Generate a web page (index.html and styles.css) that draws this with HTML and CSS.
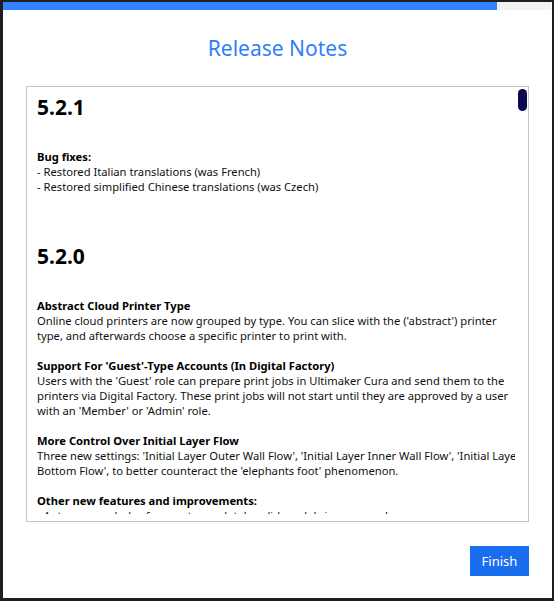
FILE: index.html
```html
<!DOCTYPE html>
<html>
<head>
<meta charset="utf-8">
<link rel="stylesheet" href="styles.css">
</head>
<body>
<div class="backdrop">
  <div class="dialog">
    <div class="progress"><div class="progress-fill"></div></div>
    <h1 class="title">Release Notes</h1>
    <div class="notes">
      <div class="notes-scroll">
        <h2 class="version first">5.2.1</h2>
        <p><b>Bug fixes:</b><br>- Restored Italian translations (was French)<br>- Restored simplified Chinese translations (was Czech)</p>
        <h2 class="version second">5.2.0</h2>
        <p class="after-version"><b>Abstract Cloud Printer Type</b><br>Online cloud printers are now grouped by type. You can slice with the ('abstract') printer<br>type, and afterwards choose a specific printer to print with.</p>
        <p><b>Support For 'Guest'-Type Accounts (In Digital Factory)</b><br>Users with the 'Guest' role can prepare print jobs in Ultimaker Cura and send them to the<br>printers via Digital Factory. These print jobs will not start until they are approved by a user<br>with an 'Member' or 'Admin' role.</p>
        <p><b>More Control Over Initial Layer Flow</b><br>Three new settings: 'Initial Layer Outer Wall Flow', 'Initial Layer Inner Wall Flow', 'Initial Layer<br>Bottom Flow', to better counteract the 'elephants foot' phenomenon.</p>
        <p><b>Other new features and improvements:</b><br>- Auto-remove holes from not completely solid models in vase mode</p>
      </div>
      <div class="thumb"></div>
    </div>
    <div class="actions">
      <button class="finish">Finish</button>
    </div>
  </div>
</div>
</body>
</html>
```

FILE: styles.css
```css
html, body {
  margin: 0;
  padding: 0;
  background: #202020;
}
.backdrop {
  width: 554px;
  height: 601px;
  padding: 2px 2px 3px 3px;
  box-sizing: border-box;
  background: #1e1e1e;
}
.dialog {
  width: 549px;
  height: 596px;
  background: #ffffff;
  display: flex;
  flex-direction: column;
  font-family: "Noto Sans", "Open Sans", sans-serif;
}
.progress {
  height: 8px;
  background: #f2f2f2;
  margin-right: 1px;
}
.progress-fill {
  width: 494px;
  height: 8px;
  background: #3282ff;
}
.title {
  margin: 0;
  height: 76px;
  line-height: 76px;
  text-align: center;
  font-weight: 400;
  font-size: 21px;
  color: #2f7ff8;
}
.notes {
  position: relative;
  margin: 0 23px 0 23px;
  height: 436px;
  border: 1px solid #c4c4c4;
  box-sizing: border-box;
}
.notes-scroll {
  height: 427px;
  margin-right: 13px;
  overflow: hidden;
  padding: 5px 0 0 10px;
  box-sizing: border-box;
  color: #101010;
  font-size: 11.2px;
  line-height: 15px;
  white-space: nowrap;
}
.version {
  margin: 0;
  height: 30px;
  line-height: 30px;
  font-size: 21px;
  font-weight: 700;
  color: #000;
}
.version.second {
  margin-top: 47px;
}
.notes p {
  margin: 0 0 15px 0;
}
.notes .version + p {
  margin-top: 27px;
}
.notes b {
  font-weight: 700;
  color: #000;
}
.thumb {
  position: absolute;
  top: 2px;
  right: 1px;
  width: 9px;
  height: 22px;
  border-radius: 5px;
  background: #0a0850;
}
.actions {
  display: flex;
  justify-content: flex-end;
  padding: 24px 23px 0 0;
}
.finish {
  width: 59px;
  height: 30px;
  border: none;
  border-radius: 0;
  background: #196ef0;
  color: #ffffff;
  font-family: "Noto Sans", "Open Sans", sans-serif;
  font-size: 13px;
  padding: 0;
}
```
